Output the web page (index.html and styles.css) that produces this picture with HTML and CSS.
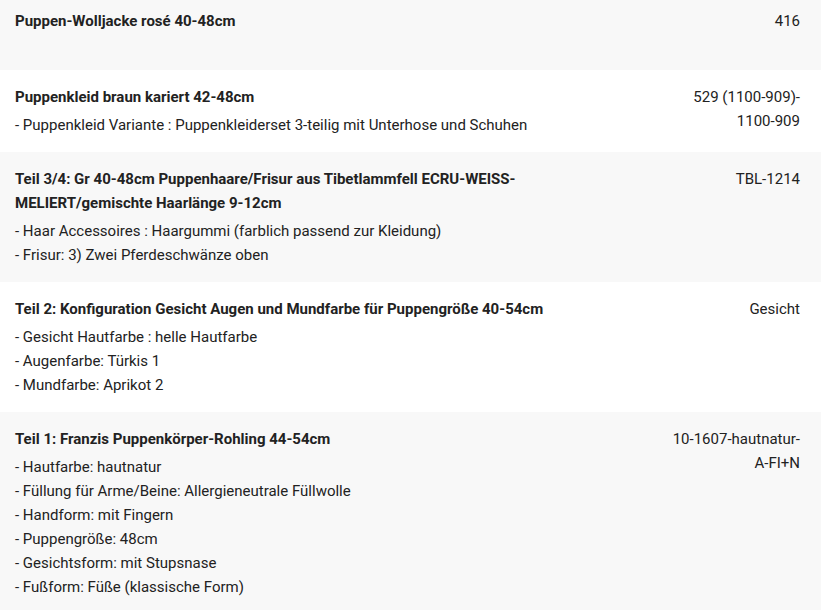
FILE: index.html
```html
<!DOCTYPE html>
<html lang="de">
<head>
<meta charset="utf-8">
<link rel="stylesheet" href="styles.css">
</head>
<body>
<div class="list">
  <div class="row grey first">
    <div class="desc">
      <div class="title">Puppen-Wolljacke rosé 40-48cm</div>
      <div class="opts empty"></div>
    </div>
    <div class="sku">416</div>
  </div>
  <div class="row">
    <div class="desc">
      <div class="title">Puppenkleid braun kariert 42-48cm</div>
      <div class="opts">
        <div>- Puppenkleid Variante : Puppenkleiderset 3-teilig mit Unterhose und Schuhen</div>
      </div>
    </div>
    <div class="sku">529 (1100-909)-<wbr>1100-909</div>
  </div>
  <div class="row grey">
    <div class="desc">
      <div class="title">Teil 3/4: Gr 40-48cm Puppenhaare/Frisur aus Tibetlammfell ECRU-WEISS-MELIERT/gemischte Haarlänge 9-12cm</div>
      <div class="opts">
        <div>- Haar Accessoires : Haargummi (farblich passend zur Kleidung)</div>
        <div>- Frisur: 3) Zwei Pferdeschwänze oben</div>
      </div>
    </div>
    <div class="sku">TBL-1214</div>
  </div>
  <div class="row">
    <div class="desc">
      <div class="title">Teil 2: Konfiguration Gesicht Augen und Mundfarbe für Puppengröße 40-54cm</div>
      <div class="opts">
        <div>- Gesicht Hautfarbe : helle Hautfarbe</div>
        <div>- Augenfarbe: Türkis 1</div>
        <div>- Mundfarbe: Aprikot 2</div>
      </div>
    </div>
    <div class="sku">Gesicht</div>
  </div>
  <div class="row grey">
    <div class="desc">
      <div class="title">Teil 1: Franzis Puppenkörper-Rohling 44-54cm</div>
      <div class="opts">
        <div>- Hautfarbe: hautnatur</div>
        <div>- Füllung für Arme/Beine: Allergieneutrale Füllwolle</div>
        <div>- Handform: mit Fingern</div>
        <div>- Puppengröße: 48cm</div>
        <div>- Gesichtsform: mit Stupsnase</div>
        <div>- Fußform: Füße (klassische Form)</div>
      </div>
    </div>
    <div class="sku">10-1607-hautnatur-A-FI+N</div>
  </div>
</div>
</body>
</html>
```
FILE: styles.css
```css
html, body {
  margin: 0;
  padding: 0;
  background: #ffffff;
}
body {
  font-family: Roboto, "Noto Sans", Arial, sans-serif;
  font-size: 15px;
  line-height: 24px;
  color: #222222;
}
.list {
  display: flex;
  flex-direction: column;
}
.row {
  display: grid;
  grid-template-columns: 1fr 135px;
  column-gap: 105px;
  padding: 15px 21px 15px 15px;
}
.row.grey {
  background: #f8f8f8;
}
.row.first {
  padding-top: 9px;
}
.title {
  font-weight: 700;
  margin-bottom: 4px;
}
.opts.empty {
  height: 18px;
}
.sku {
  text-align: right;
}
```
